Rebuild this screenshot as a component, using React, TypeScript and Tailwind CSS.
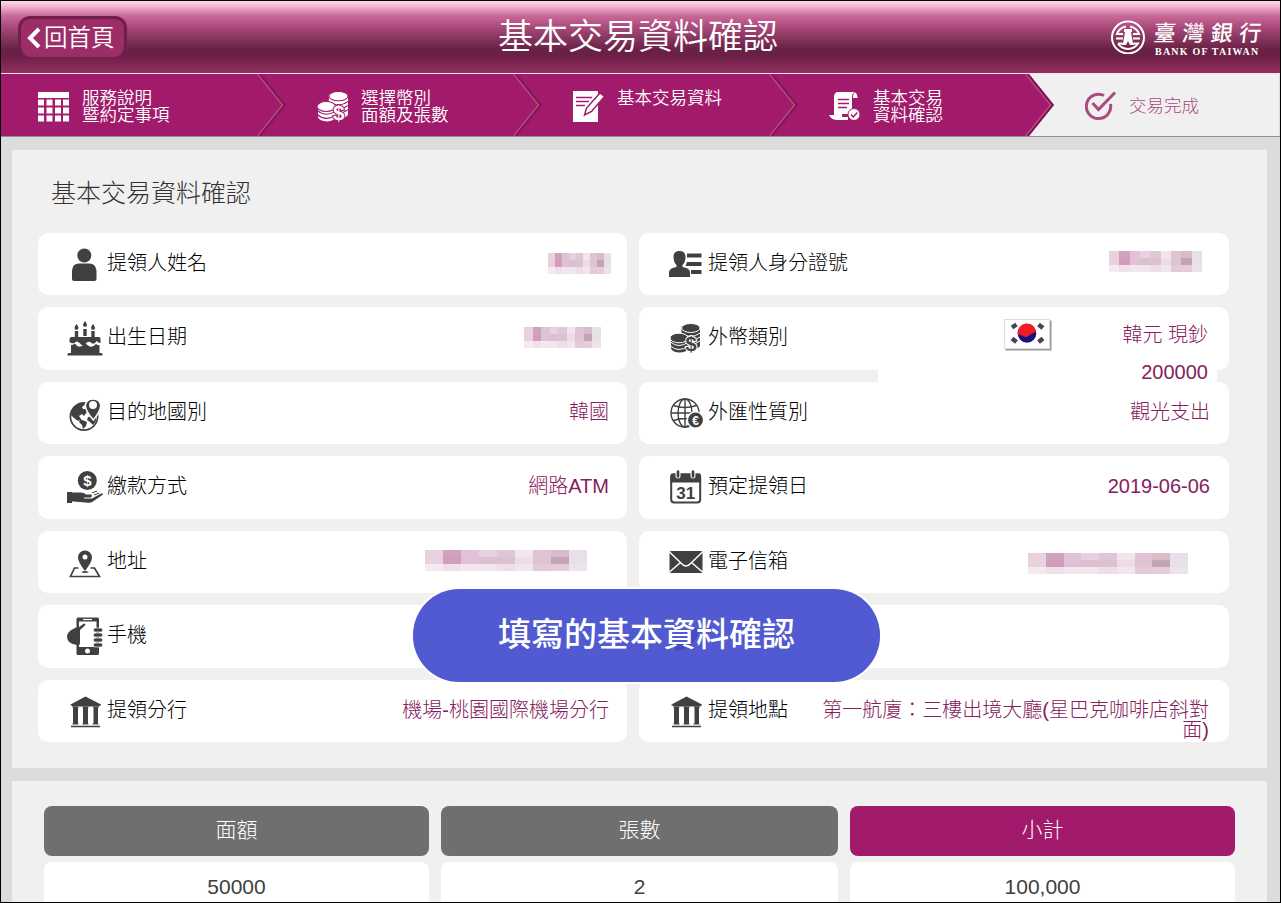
import type { ReactNode } from 'react';
import { FaPhoneAlt } from 'react-icons/fa';

const MOSAIC = [
    ['#e9d2dd', '#cfa2bd', '#e0c1d8', '#e6d1de', '#dfc6d4', '#f1e6ed', '#e1c4d4', '#d8bcca', '#e8e0e8'],
    ['#e9d2dd', '#d49cbc', '#e0c1d8', '#dbc0d0', '#dcc2d0', '#ebdce5', '#e1c4d4', '#c2a4b4', '#e8e0e8'],
    ['#f4eaf0', '#f0e1e9', '#f2e6f0', '#f1e6ee', '#eedfe7', '#f1e6ee', '#e3cad8', '#e4ccd8', '#ece4ea'],
];

// Personal data is shown as a blurred block
function Mosaic({ className }: { className: string }) {
    return (
        <div className={`grid grid-cols-9 h-[21px] shrink-0 ${className}`}>
            {MOSAIC.flat().map((color, i) => (
                <span key={i} style={{ backgroundColor: color }} />
            ))}
        </div>
    );
}

function RowIcon({ children }: { children: ReactNode }) {
    return (
        <svg viewBox="0 0 36 40" className="w-9 h-10 shrink-0 mt-[11px] fill-[#404041]">
            {children}
        </svg>
    );
}

function PersonIcon() {
    return (
        <RowIcon>
            <circle cx="17.3" cy="11.500" r="7" />
            <path d="M12 19.500h10.500q6 0 7 7v8.500q0 2-2 2h-20.500q-2 0-2-2v-8.500q.5-7 7-7z" />
        </RowIcon>
    );
}

function CakeIcon() {
    return (
        <RowIcon>
            {[9.500, 18, 26].map((x, i) => (
                <g key={x}>
                    <path d={`M${x} ${i === 1 ? 3 : 6}q-4 5 0 6q4-1 0-6z`} />
                    <path d={`M${x - 1.700} ${i === 1 ? 11 : 13}h3.400v7h-3.400z`} />
                </g>
            ))}
            <path d="M4 19h28q1.500 0 1.500 2v4q-2 0-4-2q-2 4-5 2q-3-3-6 1q-3 3-6-1q-3-3-5 0q-3 1-5-1q-.5-4 1.500-5z" />
            <path d="M4 27q2 0 4-1.500q3 5 7 2.500q3-4 6-.5q4 3 8-1.500q1.500 1.500 3.500 1v8h1q2 0 2 1v1.500h-35v-1.500q0-1 2-1h1.500z" />
        </RowIcon>
    );
}

function WorldPinIcon() {
    return (
        <RowIcon>
            <circle cx="17" cy="23.500" r="13.600" fill="white" stroke="#404041" strokeWidth="1.700" />
            <path d="M4 22q0-8 8-11q4-1.500 7 0l-4 3l1 2l3 0l1 3l-3 4l-2-2l-3 2l2 3l-3 2l-4-3z" />
            <path d="M13 26l7 3l-1 4l-3 3l-1-4l-3-3zM21 24l8-1q1 5-3 9l-3-3l-3-2z" />
            <path d="M26.300 27q-8-9-8-15a8 8 0 0 1 15.500 0q0 6-7.500 15z" stroke="white" strokeWidth="1.500" />
            <circle cx="26" cy="12" r="4" fill="white" />
        </RowIcon>
    );
}

function PaymentIcon() {
    return (
        <RowIcon>
            <circle cx="20.300" cy="13.500" r="9.500" />
            <text x="20.300" y="19" textAnchor="middle" className="font-['Liberation_Sans'] font-bold text-[15px]" fill="white">$</text>
            <path d="M0 25h5v11h-5z" />
            <path d="M4 25.500h10q3 0 5 2h5q2 1 0 3h-7v1h8l9-5q2-.5 2 1l-10 7q-2 1.500-5 1.300l-14-1.300h-3z" />
            <path d="M25 26l5-2M27 28l5-2" stroke="#404041" strokeWidth="1" />
        </RowIcon>
    );
}

function AddressIcon() {
    return (
        <RowIcon>
            <path d="M18 29q-7-9-7-13.500a7 7 0 0 1 14 0q0 4.500-7 13.500z" />
            <circle cx="18" cy="15" r="2.500" fill="white" />
            <path d="M11.500 26h-4l-4 8.500h29l-5-8.500h-4" fill="none" stroke="#404041" strokeWidth="1.700" />
            <path d="M14 30q4-2 8 0q-4 2-8 0z" />
        </RowIcon>
    );
}

function MobileIcon() {
    return (
        <RowIcon>
            <rect x="9.500" y="1.500" width="22.500" height="37.500" rx="1.500" />
            <path d="M12 5.500h17.500v25.500h-17.500z" fill="white" />
            <path d="M16 3.500h9" stroke="white" strokeWidth="1.200" />
            <circle cx="20.500" cy="35" r="2.500" fill="white" />
            <path d="M12 11l5-3.500q2 0 1 2l-5 4.500v13q0 3-3 2q-10-1-10-8.500q0-5 9-9z" />
            {[12, 17, 22, 27].map((y) => (
                <rect key={y} x="26.500" y={y} width="9" height="4" rx="1.600" stroke="white" strokeWidth=".7" />
            ))}
        </RowIcon>
    );
}

function BankIcon() {
    return (
        <RowIcon>
            <path d="M18.500 5.500l15.500 8v1h-30.500v-1zM6 16h5v17h-5zM16 16h5v17h-5zM26.500 16h4.500v17h-4.500zM5 14h27.500v1.500h-27.500zM4 34.800h29v1.400h-29z" />
            <path d="M5.500 16h6M15.500 16h6M26 16h6M5.500 33h6M15.500 33h6M25.500 33h6" stroke="#404041" strokeWidth="1" />
        </RowIcon>
    );
}

function IdIcon() {
    return (
        <RowIcon>
            <path d="M11.500 7q6 0 6 6q0 5-3 8v2q7 1 7.500 5v5h-21v-5q.5-4 7.500-5v-2q-3-3-3-8q0-6 6-6z" />
            <path d="M19 9.500h14.500v4h-14.500zM19 18h14.500v4h-16zM23 26h10.500v4h-10.500z" />
        </RowIcon>
    );
}

function CoinsShape({ gap, dollar }: { gap: string; dollar: string }) {
    return (
        <>
            <path d="M13.500 8v20h18.500v-20z" />
            <ellipse cx="22.800" cy="27.500" rx="9.200" ry="4" />
            <ellipse cx="22.800" cy="10" rx="9.200" ry="4.500" stroke={gap} strokeWidth="1" />
            <path d="M13.500 15q9 7 18.500 0M13.500 19q9 7 18.500 0M13.500 23q9 7 18.500 0" fill="none" stroke={gap} strokeWidth="1" />
            <path d="M3 20v10h17v-10z" />
            <ellipse cx="11.500" cy="30" rx="8.500" ry="4.500" />
            <ellipse cx="11" cy="20" rx="9" ry="4.800" stroke={gap} strokeWidth="1" />
            <path d="M2.500 24q8 7 18 0M2.500 28q8 7 18 0" fill="none" stroke={gap} strokeWidth="1" />
            <text x="23" y="33" textAnchor="middle" stroke={gap} strokeWidth="2" paintOrder="stroke" className="font-['Liberation_Sans'] font-bold text-[20px]" fill={dollar}>$</text>
        </>
    );
}

function CurrencyIcon() {
    return (
        <RowIcon>
            <CoinsShape gap="white" dollar="#404041" />
        </RowIcon>
    );
}

function ExchangeIcon() {
    return (
        <RowIcon>
            <g fill="none" stroke="#404041" strokeWidth="1.400">
                <circle cx="17" cy="20" r="14" />
                <ellipse cx="17" cy="20" rx="7" ry="14" />
                <path d="M17 6v28M3 20h28M5.500 12.500q11 4 23 0M5.500 27.500q11-4 23 0" />
            </g>
            <circle cx="27.500" cy="27" r="8.200" stroke="white" strokeWidth="1.500" />
            <text x="27.500" y="31.500" textAnchor="middle" className="font-['Liberation_Sans'] font-bold text-[12px]" fill="white">€</text>
        </RowIcon>
    );
}

function CalendarIcon() {
    return (
        <RowIcon>
            <rect x="3.200" y="7.500" width="29" height="28" rx="3" fill="white" stroke="#404041" strokeWidth="2" />
            <path d="M4 6.500h27.500q1.500 0 1.500 2v7h-30.500v-7q0-2 1.500-2z" />
            <path d="M10 3v6M25 3v6" stroke="white" strokeWidth="5" strokeLinecap="round" />
            <path d="M10 4.500v5M25 4.500v5" stroke="#404041" strokeWidth="2.700" strokeLinecap="round" />
            <text x="17.800" y="31.500" textAnchor="middle" className="font-['Liberation_Sans'] font-bold text-[17px]">31</text>
        </RowIcon>
    );
}

function MailIcon() {
    return (
        <RowIcon>
            <rect x="1.500" y="9" width="33" height="22" rx="1.500" />
            <path d="M1.500 10l12.500 12q4 4 8 0l12.500-12M1.500 30l11-9.500M34.500 30l-11-9.500" fill="none" stroke="white" strokeWidth="1.500" />
        </RowIcon>
    );
}

function KoreaFlag() {
    return (
        <svg viewBox="0 0 48 32" className="w-12 h-8">
            <rect x="1.500" y="1.500" width="46" height="30" fill="#9a9a9a" />
            <rect x=".5" y=".5" width="45" height="29" fill="white" stroke="#dddddd" />
            <g stroke="#45455a" strokeWidth="4.500">
                <path d="M8 8.500l4.500-3M34.500 5.500l4.500 3.500M8 19.500l4.500 3.500M34.500 23l4.500-3.500" />
            </g>
            <circle cx="23" cy="14.500" r="9.300" fill="#14147c" />
            <path d="M13.800 15.500a9.300 9.300 0 1 1 18.400-2.500q-4 .5-7 3.500q-3 2.500-6 .5q-2.500-1.500-5.400-1.500z" fill="#ee1c24" />
        </svg>
    );
}

function StepIcon({ children }: { children: ReactNode }) {
    return (
        <svg viewBox="0 0 32 32" className="w-8 h-8 shrink-0 fill-white">
            {children}
        </svg>
    );
}

const STEPS = [
    {
        lines: ['服務說明', '暨約定事項'],
        icon: (
            <StepIcon>
                <path d="M0 1h31v6h-31z" />
                {[9, 17, 25].map((y) => [0, 8.500, 17, 25].map((x) => <rect key={`${x}-${y}`} x={x} y={y - 0.5} width="6" height="6" />))}
            </StepIcon>
        ),
    },
    {
        lines: ['選擇幣別', '面額及張數'],
        icon: (
            <svg viewBox="2 5 31 31" className="w-8 h-8 shrink-0 fill-white">
                <CoinsShape gap="#a11a6b" dollar="white" />
            </svg>
        ),
    },
    {
        lines: ['基本交易資料'],
        icon: (
            <StepIcon>
                <path d="M0 0h25v31h-25z" />
                <path d="M3 6.500h16M3 10.500h13M3 14.500h9" stroke="#a11a6b" strokeWidth="1.500" />
                <path d="M27 2l4.500 3.500l-13 15l-7 3.500l2-7z" stroke="#a11a6b" strokeWidth="1.500" />
            </StepIcon>
        ),
    },
    {
        lines: ['基本交易', '資料確認'],
        icon: (
            <StepIcon>
                <path d="M8 1h18q-3 1-3 5v17h-10q1 6-4 6q-7 0-9-5h5v-18q0-4 3-5z" />
                <path d="M24 7q0-5 2-5.500q2.500 1 2.500 5.500zM9 26h10v3h-10z" />
                <path d="M9 8.500h11M9 12.500h11M9 16.500h9" stroke="#a11a6b" strokeWidth="1.500" />
                <circle cx="25" cy="23.500" r="6" stroke="#a11a6b" strokeWidth="1" />
                <path d="M22 23.500l2.300 2.500l4-4.500" fill="none" stroke="#a11a6b" strokeWidth="1.500" />
            </StepIcon>
        ),
    },
    {
        lines: ['交易完成'],
        icon: (
            <StepIcon>
                <g fill="none" stroke="#ab4b7d" strokeWidth="3">
                    <path d="M19 4.500a12.200 12.200 0 1 0 6.500 8.500" />
                    <path d="M7.500 12l6 6.500l16.500-17" />
                </g>
            </StepIcon>
        ),
    },
];

function StepArrow() {
    return (
        <svg viewBox="0 0 31 62" className="absolute left-0 top-0 w-[31px] h-[62px]">
            <path d="M0 0h4l25 31l-25 31h-4z" fill="#a11a6b" />
            <path d="M2.500 0l25 31l-25 31" fill="none" stroke="#7d1650" strokeWidth="2.200" />
            <path d="M.5 0l25 31l-25 31" fill="none" stroke="#b6497f" strokeWidth="1.500" />
        </svg>
    );
}

function InfoRow({ icon, label, children }: { icon: ReactNode; label: string; children?: ReactNode }) {
    return (
        <div className="flex items-start h-[62.5px] rounded-[10px] bg-white pl-[29px]">
            {icon}
            <span className="ml-[4px] mt-[15px] leading-[30px] text-black whitespace-nowrap">{label}</span>
            <div className="flex-1 flex justify-end text-[#85205c]">{children}</div>
        </div>
    );
}

function Value({ children, className = 'mr-[19px]' }: { children: ReactNode; className?: string }) {
    return <span className={`mt-[15px] leading-[30px] whitespace-nowrap ${className}`}>{children}</span>;
}

const TOTALS = [
    { title: '面額', value: '50000', head: 'bg-[#6f6f6f]' },
    { title: '張數', value: '2', head: 'bg-[#6f6f6f]' },
    { title: '小計', value: '100,000', head: 'bg-[#a11a6b]' },
];

export default function App() {
    return (
        <div className="relative w-[1281px] h-[903px] overflow-hidden border border-black bg-[#dcdcdc] font-['Liberation_Sans','Noto_Sans_CJK_TC',sans-serif] font-light">
            <header className="flex items-start justify-between h-[73px] border-b border-[#f6dfec] bg-[linear-gradient(to_bottom,#ffd9ee_0px,#f3b8d5_5px,#c96798_15px,#a94a7b_26px,#8a3862_36px,#6b2145_48px,#6a2044_54px,#932e61_72px)]">
                <div className="flex-1 flex">
                    <button className="mt-[15px] ml-[17px] flex items-center h-[41px] w-[109px] rounded-xl border-[3px] border-b-0 border-[#711f49] bg-[#9c2d67] pl-[6px] text-[23.500px] text-white">
                        <svg viewBox="0 0 14 22" className="w-[14px] h-[22px] shrink-0">
                            <path d="M12 2l-9 9l9 9" fill="none" stroke="white" strokeWidth="4" />
                        </svg>
                        <span className="ml-[3px] leading-9 font-[350] whitespace-nowrap">回首頁</span>
                    </button>
                </div>
                <h1 className="mt-[10px] ml-[11px] text-[35px] leading-[52px] font-[350] text-white">基本交易資料確認</h1>
                <div className="flex-1 flex justify-end pr-[16px] pt-[17px] text-white">
                    <svg viewBox="0 0 36 36" className="w-9 h-9">
                        <circle cx="18" cy="19.500" r="16" fill="none" stroke="white" strokeWidth="2" />
                        <g fill="none" stroke="white" strokeWidth="2">
                            <path d="M16 8.500a11.500 11.500 0 0 0-9 7.500h6M20 8.500a11.500 11.500 0 0 1 9 7.500h-6M6 20.500h7M30 20.500h-7M8 25.500q3 5 10 5.500q7-.5 10-5.500h-4M8 25.500h4" />
                        </g>
                        <path d="M14 11h8v3h-1l1.500 9l2 4h-4.500l-2-4l-2 4h-4.500l2-4l1.500-9h-1z" fill="white" />
                    </svg>
                    <div className="ml-[8px] w-[110px]">
                        <div className="-mt-[1px] font-['Noto_Sans_CJK_TC',sans-serif] font-medium text-[22px] leading-[29px] tracking-[6.500px] whitespace-nowrap -skew-x-6">臺灣銀行</div>
                        <div className="ml-[1px] font-['Liberation_Serif',serif] font-bold text-[10px] leading-[11px] tracking-[1.200px] whitespace-nowrap">BANK OF TAIWAN</div>
                    </div>
                </div>
            </header>

            <nav className="flex h-[63px] border-b border-[#8f8f8f]">
                {STEPS.map((step, i) => (
                    <div
                        key={step.lines[0]}
                        className={`relative flex shrink-0 h-[62px] ${i === 4 ? 'w-[254px] bg-[#f0f0f0] text-[#ab4b7d]' : 'w-64 bg-[#a11a6b] text-white font-[350]'} ${i === 0 ? 'pl-[37px]' : 'pl-[60px]'}`}
                    >
                        {i > 0 && <StepArrow />}
                        <div className="mt-[17px]">{step.icon}</div>
                        <div className={`ml-[12px] text-[17.500px] leading-[17px] whitespace-nowrap ${i === 4 ? 'mt-[24px]' : 'mt-[16px]'}`}>
                            {step.lines.map((line) => (
                                <div key={line}>{line}</div>
                            ))}
                        </div>
                    </div>
                ))}
            </nav>

            <main className="pl-[11px] pr-[13px] pt-[13px]">
                <section className="h-[618px] bg-[#f0f0f0] pl-[26px] pr-[38px]">
                    <h2 className="pt-[25px] pl-[13px] h-[82.600px] text-[25px] leading-[36px] text-[#333333]">基本交易資料確認</h2>
                    <div className="grid grid-cols-[589px_590px] gap-3 text-xl">
                        <InfoRow icon={<PersonIcon />} label="提領人姓名">
                            <Mosaic className="w-[63px] mt-5 mr-4" />
                        </InfoRow>
                        <InfoRow icon={<IdIcon />} label="提領人身分證號">
                            <Mosaic className="w-[93px] mt-[18px] mr-[27px]" />
                        </InfoRow>

                        <InfoRow icon={<CakeIcon />} label="出生日期">
                            <Mosaic className="w-[77px] mt-5 mr-[26px]" />
                        </InfoRow>
                        <InfoRow icon={<CurrencyIcon />} label="外幣類別">
                            <div className="flex justify-between w-[339px] h-[67px] mt-2 mr-3 pl-[126px] pr-[9px] bg-white">
                                <div className="mt-[4px]">
                                    <KoreaFlag />
                                </div>
                                <div className="mt-[2px] text-right leading-[37px]">
                                    <div>韓元 現鈔</div>
                                    <div>200000</div>
                                </div>
                            </div>
                        </InfoRow>

                        <InfoRow icon={<WorldPinIcon />} label="目的地國別">
                            <Value className="mr-[18px]">韓國</Value>
                        </InfoRow>
                        <InfoRow icon={<ExchangeIcon />} label="外匯性質別">
                            <Value>觀光支出</Value>
                        </InfoRow>

                        <InfoRow icon={<PaymentIcon />} label="繳款方式">
                            <Value className="mr-[18px]">網路ATM</Value>
                        </InfoRow>
                        <InfoRow icon={<CalendarIcon />} label="預定提領日">
                            <Value>2019-06-06</Value>
                        </InfoRow>

                        <InfoRow icon={<AddressIcon />} label="地址">
                            <Mosaic className="w-[162px] mt-[19px] mr-10" />
                        </InfoRow>
                        <InfoRow icon={<MailIcon />} label="電子信箱">
                            <Mosaic className="w-[160px] mt-[22px] mr-[41px]" />
                        </InfoRow>

                        <InfoRow icon={<MobileIcon />} label="手機" />
                        <InfoRow icon={<FaPhoneAlt className="w-6 h-6 ml-[6px] mr-[6px] mt-[22px] -scale-x-100 text-[#404041]" />} label="" />

                        <InfoRow icon={<BankIcon />} label="提領分行">
                            <Value className="mr-[18px]">機場-桃園國際機場分行</Value>
                        </InfoRow>
                        <InfoRow icon={<BankIcon />} label="提領地點">
                            <div className="w-[400px] mt-[20px] mr-[20px] text-right leading-5">第一航廈：三樓出境大廳(星巴克咖啡店斜對面)</div>
                        </InfoRow>
                    </div>
                </section>

                <section className="mt-[13px] h-[130px] bg-[#f0f0f0] pl-8 pr-8 pt-[25px]">
                    <div className="grid grid-cols-[385px_397px_385px] gap-3 text-center text-[21px]">
                        {TOTALS.map((col) => (
                            <div key={col.title}>
                                <div className={`h-[50px] rounded-lg leading-[48px] text-white ${col.head}`}>{col.title}</div>
                                <div className="mt-[6px] h-[50px] rounded-lg bg-white leading-[50px] text-[#404040]">{col.value}</div>
                            </div>
                        ))}
                    </div>
                </section>
            </main>

            {/* Caption over the form */}
            <div className="absolute left-[412px] top-[588px] w-[467px] h-[93px] rounded-[46px] bg-[#444dcd]/93 text-center text-[33px] leading-[92px] font-medium text-white shadow-[0_0_0_2px_white]">
                填寫的基本資料確認
            </div>
        </div>
    );
}
